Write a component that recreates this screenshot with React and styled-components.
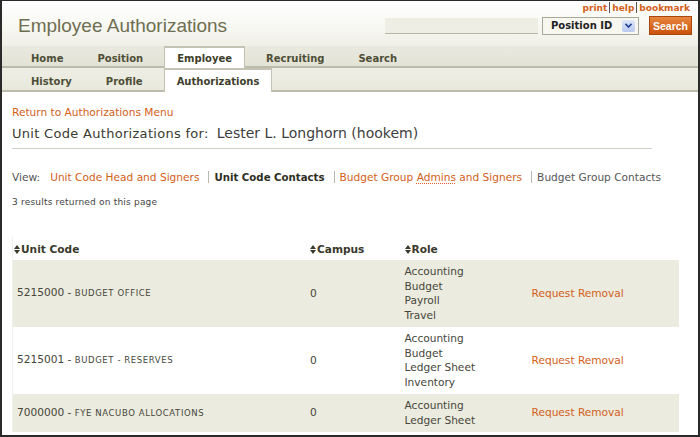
import React from "react";
import styled, { createGlobalStyle } from "styled-components";

const GlobalStyle = createGlobalStyle`
  html, body { margin: 0; padding: 0; background: #fff; }
  body { font-family: "DejaVu Sans", Verdana, sans-serif; }
`;

const orange = "#d2601a";
const ink = "#46463a";

const Frame = styled.div`
  width: 700px;
  height: 437px;
  box-sizing: border-box;
  border-top: 1px solid #2a2a2a;
  border-left: 2px solid #2a2a2a;
  border-right: 2px solid #2a2a2a;
  border-bottom: 2px solid #2a2a2a;
  overflow: hidden;
  background: #fff;
`;

const Header = styled.div`
  background: linear-gradient(#ffffff 0%, #f6f6f0 45%, #e6e6da 100%);
`;

const TopRow = styled.div`
  height: 45px;
  display: flex;
  justify-content: space-between;
  padding: 0 6px 0 16px;
`;

const Title = styled.h1`
  margin: 14px 0 0;
  font-family: "Liberation Sans", Arial, sans-serif;
  font-weight: normal;
  font-size: 19px;
  color: #6e6e50;
`;

const Tools = styled.div`
  display: flex;
  flex-direction: column;
  align-items: flex-end;
  padding-top: 1px;
  gap: 3px;
`;

const Utility = styled.div`
  display: flex;
  align-items: center;
  font-size: 9px;
  font-weight: bold;
  padding-right: 2px;
  a { color: ${orange}; text-decoration: none; }
  span { width: 1px; height: 11px; background: #555; margin: 0 2px; }
`;

const SearchRow = styled.div`
  display: flex;
  align-items: center;
`;

const SearchInput = styled.div`
  width: 153px;
  height: 15px;
  background: #efeee4;
  border-bottom: 1px solid #b8b8a8;
  margin-right: 4px;
`;

const Select = styled.div`
  width: 84px;
  height: 16px;
  border: 1px solid #a8a898;
  background: #f7f7f0;
  display: flex;
  align-items: center;
  justify-content: space-between;
  padding: 0 3px 0 8px;
  font-size: 10px;
  font-weight: bold;
  color: #222;
  margin-right: 10px;
`;

const Arrow = styled.span`
  width: 13px;
  height: 12px;
  border-radius: 2px;
  background: linear-gradient(#dfe7fb, #b9c9ee);
  display: flex;
  align-items: center;
  justify-content: center;
`;

const SearchButton = styled.div`
  height: 17px;
  padding: 0 3px;
  display: flex;
  align-items: center;
  background: linear-gradient(#e8863e, #c9520e);
  border: 1px solid #a9470e;
  color: #fff;
  font-family: "Liberation Sans", Arial, sans-serif;
  font-size: 10.5px;
  font-weight: bold;
`;

const TabBar = styled.div`
  display: flex;
  gap: 8px;
  padding-left: 16px;
  height: ${(p) => p.$h}px;
  align-items: flex-end;
  background: ${(p) => p.$bg};
  border-bottom: 2px solid #bdbcac;
`;

const Tab = styled.div`
  height: ${(p) => p.$h}px;
  padding: 0 12px;
  display: flex;
  align-items: center;
  font-size: 10px;
  font-weight: bold;
  color: #4e4e36;
  white-space: nowrap;
  box-sizing: border-box;
  border: 1px solid transparent;
  border-bottom: none;
  margin-bottom: -2px;
  ${(p) =>
    p.$active &&
    `background: #fff; border-color: #c4c3b4; border-top-width: 2px; color: #3e3e2c; height: ${p.$h + 2}px;`}
`;

const Content = styled.div`
  padding: 9px 20px 0 10px;
  color: ${ink};
`;

const BackLink = styled.a`
  font-size: 10.6px;
  color: ${orange};
  text-decoration: none;
`;

const Heading = styled.div`
  display: flex;
  align-items: baseline;
  gap: 8px;
  margin-top: 5px;
  padding-bottom: 7px;
  border-bottom: 1px solid #cfcfc6;
  margin-right: 26px;
`;

const HeadLabel = styled.span`
  font-size: 13px;
  color: #3a3a30;
  letter-spacing: 0.3px;
`;

const HeadName = styled.span`
  font-size: 14px;
  color: #3e3e3e;
`;

const ViewRow = styled.div`
  display: flex;
  align-items: center;
  white-space: nowrap;
  font-size: 10.6px;
  margin-top: 22px;
  color: #555;
`;

const ViewItem = styled.span`
  flex-shrink: 0;
  color: ${(p) => (p.$link ? orange : p.$current ? "#2e2e22" : "#555")};
  font-weight: ${(p) => (p.$current ? "bold" : "normal")};
  font-size: ${(p) => (p.$current ? "10.2px" : "inherit")};
  margin-right: ${(p) => p.$gap || 0}px;
`;

const Sep = styled.span`
  flex-shrink: 0;
  width: 1px;
  height: 12px;
  background: #b8b8b0;
  margin: 0 5px 0 9px;
`;

const Dotted = styled.span`
  text-decoration: underline dotted #e06030;
  text-underline-offset: 2px;
`;

const Results = styled.div`
  font-size: 9px;
  margin-top: 14px;
  color: #444;
  letter-spacing: 0.2px;
`;

const Table = styled.table`
  margin-top: 30px;
  width: 667px;
  table-layout: fixed;
  border-collapse: collapse;
  font-size: 10.6px;
  color: ${ink};
  border-left: 1px solid #f2f2ec;
`;

const Th = styled.th`
  text-align: left;
  height: 23px;
  padding: 0 0 0 1px;
  font-weight: bold;
  color: #3a3a2c;
  width: ${(p) => p.$w || "auto"};
`;

const Row = styled.tr`
  background: ${(p) => (p.$alt ? "#ebebdf" : "#fff")};
`;

const Td = styled.td`
  padding: 4px 4px 5px ${(p) => (p.$first ? 4 : 1)}px;
  vertical-align: middle;
  line-height: 14.5px;
  white-space: nowrap;
`;

const Caps = styled.span`
  font-size: 8.5px;
  letter-spacing: 0.6px;
  text-transform: uppercase;
`;

const Removal = styled.a`
  color: ${orange};
  text-decoration: none;
`;

const SortIcon = () => (
  <svg width="6" height="9" viewBox="0 0 6 9" style={{ marginRight: 1, verticalAlign: "-1px" }}>
    <path d="M3 0 L6 4 H0 Z M0 5 H6 L3 9 Z" fill="#3a3a2c" />
  </svg>
);

const rows = [
  { code: "5215000", name: "Budget Office", roles: ["Accounting", "Budget", "Payroll", "Travel"] },
  { code: "5215001", name: "Budget - Reserves", roles: ["Accounting", "Budget", "Ledger Sheet", "Inventory"] },
  { code: "7000000", name: "FYE Nacubo Allocations", roles: ["Accounting", "Ledger Sheet"] },
];

export default function App() {
  return (
    <>
      <GlobalStyle />
      <Frame>
        <Header>
          <TopRow>
            <Title>Employee Authorizations</Title>
            <Tools>
              <Utility>
                <a>print</a>
                <span />
                <a>help</a>
                <span />
                <a>bookmark</a>
              </Utility>
              <SearchRow>
                <SearchInput />
                <Select>
                  Position ID
                  <Arrow>
                    <svg width="7" height="5" viewBox="0 0 7 5">
                      <path d="M0.5 0.8 L3.5 4 L6.5 0.8" stroke="#1d3f8f" strokeWidth="1.6" fill="none" />
                    </svg>
                  </Arrow>
                </Select>
                <SearchButton>Search</SearchButton>
              </SearchRow>
            </Tools>
          </TopRow>
          <TabBar $h={20} $bg="linear-gradient(#e9e9df, #e2e2d6)">
            {["Home", "Position", "Employee", "Recruiting", "Search"].map((t) => (
              <Tab key={t} $h={20} $active={t === "Employee"}>
                {t}
              </Tab>
            ))}
          </TabBar>
        </Header>
        <TabBar $h={22} $bg="linear-gradient(#efeee6, #e8e8dc)">
          {["History", "Profile", "Authorizations"].map((t) => (
            <Tab key={t} $h={22} $active={t === "Authorizations"}>
              {t}
            </Tab>
          ))}
        </TabBar>
        <Content>
          <BackLink>Return to Authorizations Menu</BackLink>
          <Heading>
            <HeadLabel>Unit Code Authorizations for:</HeadLabel>
            <HeadName>Lester L. Longhorn (hookem)</HeadName>
          </Heading>
          <ViewRow>
            <ViewItem $gap={10}>View:</ViewItem>
            <ViewItem $link>Unit Code Head and Signers</ViewItem>
            <Sep />
            <ViewItem $current>Unit Code Contacts</ViewItem>
            <Sep />
            <ViewItem $link>
              Budget Group <Dotted>Admins</Dotted> and Signers
            </ViewItem>
            <Sep />
            <ViewItem>Budget Group Contacts</ViewItem>
          </ViewRow>
          <Results>3 results returned on this page</Results>
          <Table>
            <thead>
              <tr>
                <Th $w="295px">
                  <SortIcon />
                  Unit Code
                </Th>
                <Th $w="93px">
                  <SortIcon />
                  Campus
                </Th>
                <Th $w="126px">
                  <SortIcon />
                  Role
                </Th>
                <Th />
              </tr>
            </thead>
            <tbody>
              {rows.map((r, i) => (
                <Row key={r.code} $alt={i % 2 === 0}>
                  <Td $first>
                    {r.code} - <Caps>{r.name}</Caps>
                  </Td>
                  <Td>0</Td>
                  <Td>
                    {r.roles.map((role) => (
                      <div key={role}>{role}</div>
                    ))}
                  </Td>
                  <Td>
                    <Removal>Request Removal</Removal>
                  </Td>
                </Row>
              ))}
            </tbody>
          </Table>
        </Content>
      </Frame>
    </>
  );
}
